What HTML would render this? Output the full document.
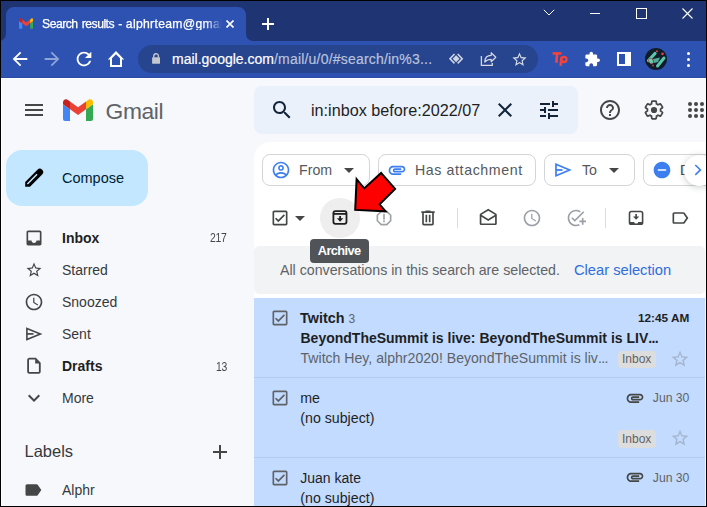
<!DOCTYPE html>
<html><head><meta charset="utf-8">
<style>
*{margin:0;padding:0;box-sizing:border-box}
html,body{width:707px;height:507px;overflow:hidden;background:#000}
body{position:relative;font-family:"Liberation Sans",sans-serif}
.a{position:absolute}
.t{position:absolute;white-space:nowrap;line-height:1}
svg{position:absolute;display:block}
</style></head><body>
<!-- chrome frame -->
<div class="a" style="left:1px;top:1px;width:705px;height:77px;background:#1f3573"></div>
<svg style="left:0;top:0" width="707" height="80" viewBox="0 0 707 80">
 <path d="M-1 41 A7 7 0 0 0 6 34 V15 A8 8 0 0 1 14 7 H238 A8 8 0 0 1 246 15 V34 A7 7 0 0 0 253 41 Z" fill="#2e52b2"/>
 <rect x="1" y="41" width="705" height="37" fill="#2e52b2"/>
 <rect x="1" y="77" width="705" height="1" fill="#2a4aa3"/>
 <rect x="0" y="0" width="707" height="1" fill="#000"/>
 <rect x="0" y="0" width="1" height="80" fill="#000"/>
 <rect x="706" y="0" width="1" height="80" fill="#000"/>
</svg>
<!-- tab title -->
<svg style="left:18.6px;top:18.3px" width="14.5" height="10.8" viewBox="0 0 14.4 10.7">
 <path d="M0 2.6 V10.7 H3.3 V5.1 Z" fill="#4285f4"/>
 <path d="M11.1 5.1 V10.7 H14.4 V2.6 Z" fill="#34a853"/>
 <path d="M0.2 1.2 L1.6 0.2 L7.2 4.5 L12.8 0.2 L14.2 1.2 L14.4 2.8 L7.2 8.2 L0 2.8 Z" fill="#ea4335"/>
 <path d="M11.1 1.6 L12.8 0.2 A1.9 1.9 0 0 1 14.4 2.1 V2.6 L11.1 5.1 Z" fill="#fbbc04"/>
 <path d="M0 2.1 A1.9 1.9 0 0 1 1.6 0.2 L3.3 1.6 V5.1 L0 2.6 Z" fill="#c5221f"/>
</svg>
<div class="t" style="left:42px;top:18px;font-size:12.2px;letter-spacing:-0.5px;word-spacing:1.2px;color:#fff;-webkit-text-stroke:0.25px #fff;width:182px;overflow:hidden;-webkit-mask-image:linear-gradient(90deg,#000 164px,transparent 180px)">Search results - <span style="letter-spacing:0.3px">alphrteam@gmail.com</span></div>
<svg style="left:226px;top:20px" width="8" height="8" viewBox="0 0 8 8"><path d="M0.5 0.5 L7.5 7.5 M7.5 0.5 L0.5 7.5" stroke="#fff" stroke-width="1.6"/></svg>
<svg style="left:262px;top:18px" width="12" height="12" viewBox="0 0 12 12"><path d="M6 0 V12 M0 6 H12" stroke="#fff" stroke-width="2"/></svg>
<!-- window controls -->
<svg style="left:543px;top:9px" width="12" height="8" viewBox="0 0 12 8"><path d="M0.8 0.8 L6 6 L11.2 0.8" stroke="#fff" stroke-width="1" fill="none"/></svg>
<div class="a" style="left:590px;top:13px;width:10px;height:1px;background:#fff"></div>
<div class="a" style="left:636px;top:8px;width:11px;height:11px;border:1px solid #fff"></div>
<svg style="left:682px;top:8px" width="11" height="11" viewBox="0 0 11 11"><path d="M0.5 0.5 L10.5 10.5 M10.5 0.5 L0.5 10.5" stroke="#fff" stroke-width="1.1"/></svg>
<!-- nav buttons -->
<svg style="left:9px;top:48px" width="22" height="22" viewBox="0 0 24 24"><path d="M20 11H7.83l5.59-5.59L12 4l-8 8 8 8 1.41-1.41L7.83 13H20v-2z" fill="#fff"/></svg>
<svg style="left:40.7px;top:48px" width="22" height="22" viewBox="0 0 24 24"><path d="M12 4l-1.41 1.41L16.17 11H4v2h12.17l-5.58 5.59L12 20l8-8z" fill="#8ea3d8"/></svg>
<svg style="left:72.5px;top:48px" width="22" height="22" viewBox="0 0 24 24"><path d="M17.65 6.35C16.2 4.9 14.21 4 12 4c-4.42 0-7.990 3.58-7.99 8s3.57 8 7.99 8c3.73 0 6.84-2.55 7.73-6h-2.08c-.82 2.33-3.04 4-5.65 4-3.31 0-6-2.69-6-6s2.69-6 6-6c1.66 0 3.14.69 4.22 1.78L13 11h7V4l-2.35 2.35z" fill="#fff"/></svg>
<svg style="left:0;top:0" width="707" height="80" viewBox="0 0 707 80"><path d="M116 51 L124.2 59.6 H122 V67 H110 V59.6 H107.8 Z M116 54.2 L120 58.2 V65 H112 V58.2 Z" fill="#fff" fill-rule="evenodd"/></svg>
<!-- omnibox -->
<div class="a" style="left:138px;top:45px;width:400px;height:28px;border-radius:14px;background:#27448f"></div>
<svg style="left:0;top:0" width="707" height="80" viewBox="0 0 707 80"><path d="M153.8 57.6 V56 A2.3 2.3 0 0 1 158.4 56 V57.6" fill="none" stroke="#c4c7cf" stroke-width="1.4"/><rect x="152.1" y="57.3" width="7.9" height="6.4" rx="0.4" fill="#c4c7cf"/></svg>
<div class="t" style="left:172px;top:52px;font-size:14px;color:#fff;-webkit-text-stroke:0.2px #fff">mail.google.com<span style="color:#b8c2dd;-webkit-text-stroke:0.2px #b8c2dd;letter-spacing:0.2px">/mail/u/0/#search/in%3...</span></div>
<svg style="left:0;top:0" width="707" height="80" viewBox="0 0 707 80">
 <path d="M454.5 54 L450 58.7 L454.5 63.4 M457.7 54 L462.2 58.7 L457.7 63.4" fill="none" stroke="#cfd4e2" stroke-width="1.6"/>
 <path d="M456.1 55.2 L459.5 58.7 L456.1 62.2 L452.7 58.7 Z" fill="#cfd4e2"/>
 <path d="M481.4 56 V65.4 H492.3 V63" fill="none" stroke="#d5d9e3" stroke-width="1.3"/>
 <path d="M484.8 62 C484.8 57.8 487.2 55.4 491.2 55.4 V52.8 L495.8 57.3 L491.2 61.8 V59.4 C488.2 59.4 486.3 60.3 484.8 62 Z" fill="none" stroke="#d5d9e3" stroke-width="1.2" stroke-linejoin="round"/>
</svg>
<svg style="left:511.4px;top:51px" width="17" height="17" viewBox="0 0 24 24"><path d="M22 9.24l-7.19-.62L12 2 9.19 8.63 2 9.24l5.46 4.73L5.82 21 12 17.27 18.18 21l-1.63-7.03L22 9.24zM12 15.4l-3.76 2.27 1-4.28-3.32-2.88 4.38-.38L12 6.1l1.71 4.04 4.38.38-3.32 2.88 1 4.28L12 15.4z" fill="#d6dbe8"/></svg>
<!-- extensions -->
<svg style="left:0;top:0" width="707" height="80" viewBox="0 0 707 80">
 <path d="M552.6 53.4 H561.4" stroke="#f4433a" stroke-width="2.6" fill="none"/>
 <path d="M557 54 L556.4 62.8" stroke="#f4433a" stroke-width="2.7" fill="none"/>
 <path d="M561.6 57 L560.6 65.8" stroke="#f4433a" stroke-width="2.6" fill="none"/>
 <circle cx="563.9" cy="59.4" r="2.6" fill="none" stroke="#f4433a" stroke-width="2.3"/>
</svg>
<svg style="left:583.6px;top:51.3px" width="16.6" height="16.6" viewBox="0 0 24 24"><path d="M20.5 11H19V7c0-1.1-.9-2-2-2h-4V3.5C13 2.12 11.88 1 10.5 1S8 2.12 8 3.5V5H4c-1.1 0-1.99.9-1.99 2v3.8H3.5c1.49 0 2.7 1.21 2.7 2.7s-1.21 2.7-2.7 2.7H2V20c0 1.1.9 2 2 2h3.8v-1.5c0-1.49 1.21-2.7 2.7-2.7 1.49 0 2.7 1.21 2.7 2.7V22H17c1.1 0 2-.9 2-2v-4h1.5c1.38 0 2.5-1.12 2.5-2.5S21.88 11 20.5 11z" fill="#fff"/></svg>
<svg style="left:617px;top:52px" width="14" height="14" viewBox="0 0 14 14"><rect x="1" y="1" width="12" height="12" fill="none" stroke="#fff" stroke-width="2"/><rect x="8" y="1" width="5" height="12" fill="#fff"/></svg>
<svg style="left:645px;top:48.3px" width="22" height="22" viewBox="0 0 22 22"><circle cx="11" cy="11" r="11" fill="#0e1d28"/>
<path d="M3.5 12.5 L10 5.5" stroke="#5cc6ad" stroke-width="3.2" stroke-linecap="round"/>
<path d="M12.5 18 L19 10" stroke="#5cc6ad" stroke-width="3" stroke-linecap="round"/>
<path d="M8 11 L15 9.5 L13 14 L9 15 Z" fill="#5cc6ad" opacity="0.85"/>
<ellipse cx="6" cy="13" rx="2.2" ry="3" transform="rotate(-30 6 13)" fill="#64d0b5" stroke="#a5413a" stroke-width="0.7"/>
<circle cx="12" cy="3.3" r="1" fill="#e0404a"/><circle cx="17.5" cy="5.8" r="1.4" fill="#e83a3a"/><circle cx="8" cy="17.5" r="0.9" fill="#d04050"/></svg>
<div class="a" style="left:687px;top:52px;width:3px;height:3px;border-radius:50%;background:#fff"></div>
<div class="a" style="left:687px;top:58px;width:3px;height:3px;border-radius:50%;background:#fff"></div>
<div class="a" style="left:687px;top:64px;width:3px;height:3px;border-radius:50%;background:#fff"></div>

<!-- gmail area -->
<div class="a" style="left:1px;top:78px;width:705px;height:428px;background:#f6f8fc"></div>

<div class="a" style="left:1px;top:78px;width:705px;height:1px;background:#fff"></div>
<div class="a" style="left:1px;top:78px;width:1px;height:428px;background:#fff"></div>
<!-- header -->
<svg style="left:22px;top:98px" width="24" height="24" viewBox="0 0 24 24"><path d="M3 18h18v-2H3v2zm0-5h18v-2H3v2zm0-7v2h18V6H3z" fill="#444746"/></svg>
<svg style="left:63px;top:99px" width="30" height="22" viewBox="0 0 30 22">
 <path d="M0 5.3 V20 A2 2 0 0 0 2 22 H7 V10.3 Z" fill="#4285f4"/>
 <path d="M23 10.3 V22 H28 A2 2 0 0 0 30 20 V5.3 Z" fill="#34a853"/>
 <path d="M7 2.6 L15 8.2 L23 2.6 V10.3 L15 16.1 L7 10.3 Z" fill="#ea4335"/>
 <path d="M23 2.6 L25 1 A3 3 0 0 1 30 3.2 V5.3 L23 10.3 Z" fill="#fbbc04"/>
 <path d="M0 3.2 A3 3 0 0 1 5 1 L7 2.6 V10.3 L0 5.3 Z" fill="#c5221f"/>
</svg>
<div class="t" style="left:105.5px;top:100px;font-size:22.8px;letter-spacing:-0.35px;color:#5f6368">Gmail</div>
<!-- compose -->
<div class="a" style="left:6px;top:150px;width:142px;height:56px;border-radius:16px;background:#c2e7ff"></div>
<svg style="left:20px;top:164px" width="28" height="28" viewBox="0 0 28 28"><path d="M5.2 22.7 V18 L17.43 5.8 A3.35 3.35 0 0 1 22.17 10.55 L10 22.7 Z" fill="#000"/><path d="M7.4 20 L17.1 10.3" stroke="#c2e7ff" stroke-width="1.5"/></svg>
<div class="t" style="left:62px;top:171px;font-size:14.5px;color:#001d35">Compose</div>
<!-- nav -->
<svg style="left:23.85px;top:228.1px" width="20" height="20" viewBox="0 0 24 24"><path d="M19 3H4.99c-1.11 0-1.98.89-1.98 2L3 19c0 1.1.88 2 1.99 2H19c1.1 0 2-.9 2-2V5c0-1.11-.9-2-2-2zm0 12h-4c0 1.66-1.35 3-3 3s-3-1.34-3-3H4.99V5H19v10z" fill="#444746"/></svg>
<div class="t" style="left:62px;top:230.5px;font-size:14px;font-weight:700;color:#1f1f1f">Inbox</div>
<div class="t" style="left:209.5px;top:231.8px;font-size:12.4px;color:#444746;letter-spacing:-0.3px;transform:scaleX(0.84);transform-origin:0 0">217</div>
<svg style="left:25.1px;top:260.9px" width="18" height="18" viewBox="0 0 24 24"><path d="M22 9.24l-7.19-.62L12 2 9.19 8.63 2 9.24l5.46 4.73L5.82 21 12 17.27 18.18 21l-1.63-7.03L22 9.24zM12 15.4l-3.76 2.27 1-4.28-3.32-2.88 4.38-.38L12 6.1l1.71 4.04 4.38.38-3.32 2.88 1 4.28L12 15.4z" fill="#444746"/></svg>
<div class="t" style="left:62px;top:262.6px;font-size:14px;color:#36383b">Starred</div>
<svg style="left:24px;top:292.1px" width="20" height="20" viewBox="0 0 24 24"><path d="M11.99 2C6.47 2 2 6.48 2 12s4.47 10 9.99 10C17.52 22 22 17.52 22 12S17.52 2 11.99 2zM12 20c-4.42 0-8-3.58-8-8s3.58-8 8-8 8 3.58 8 8-3.58 8-8 8zm.5-13H11v6l5.25 3.15.75-1.23-4.5-2.67z" fill="#444746"/></svg>
<div class="t" style="left:62px;top:294.6px;font-size:14px;color:#36383b">Snoozed</div>
<svg style="left:0;top:0" width="707" height="507" viewBox="0 0 707 507"><path d="M26.9 328.4 L40.4 333.9 L26.9 339.5 Z" fill="none" stroke="#444746" stroke-width="1.6" stroke-linejoin="miter"/><path d="M26.9 333.9 L33.5 333.9" stroke="#444746" stroke-width="1.7"/></svg>
<div class="t" style="left:62px;top:326.7px;font-size:14px;color:#36383b">Sent</div>
<svg style="left:22px;top:352px" width="24" height="28" viewBox="0 0 24 28"><path d="M7.3 6.7 H13.5 L17.8 11 V19.7 A1.2 1.2 0 0 1 16.6 20.9 H7.3 A1.2 1.2 0 0 1 6.1 19.7 V7.9 A1.2 1.2 0 0 1 7.3 6.7 Z" fill="none" stroke="#444746" stroke-width="1.8"/><path d="M13.2 7 V11.4 H17.6 Z" fill="#444746"/></svg>
<div class="t" style="left:62px;top:358.5px;font-size:14px;font-weight:700;color:#1f1f1f">Drafts</div>
<div class="t" style="left:215.5px;top:360.8px;font-size:12.4px;color:#444746;letter-spacing:-0.3px;transform:scaleX(0.84);transform-origin:0 0">13</div>
<svg style="left:22px;top:386px" width="24" height="24" viewBox="0 0 24 24"><path d="M16.59 8.59L12 13.17 7.41 8.59 6 10l6 6 6-6z" fill="#444746"/></svg>
<div class="t" style="left:62px;top:390.8px;font-size:14px;color:#36383b">More</div>
<div class="t" style="left:24.5px;top:442.7px;font-size:16.5px;color:#36383b">Labels</div>
<svg style="left:208px;top:440px" width="24" height="24" viewBox="0 0 24 24"><path d="M19 13h-6v6h-2v-6H5v-2h6V5h2v6h6v2z" fill="#444746"/></svg>
<svg style="left:23.4px;top:479.9px" width="20" height="20" viewBox="0 0 24 24"><path d="M17.63 5.84C17.27 5.33 16.67 5 16 5L5 5.01C3.9 5.01 3 5.9 3 7v10c0 1.1.9 1.99 2 1.99L16 19c.67 0 1.27-.33 1.63-.84L22 12l-4.37-6.16z" fill="#444746"/></svg>
<div class="t" style="left:62px;top:483.4px;font-size:14px;color:#36383b">Alphr</div>

<!-- search -->
<div class="a" style="left:254px;top:86px;width:324px;height:48px;border-radius:8px;background:#eaf1fb"></div>
<svg style="left:270px;top:98px" width="24" height="24" viewBox="0 0 24 24"><path d="M15.5 14h-.79l-.28-.27C15.41 12.59 16 11.11 16 9.5 16 5.91 13.09 3 9.5 3S3 5.91 3 9.5 5.91 16 9.5 16c1.61 0 3.09-.59 4.23-1.57l.27.28v.79l5 4.99L20.49 19l-4.99-5zm-6 0C7.01 14 5 11.99 5 9.5S7.01 5 9.5 5 14 7.01 14 9.5 11.99 14 9.5 14z" fill="#13243a"/></svg>
<div class="t" style="left:311px;top:102px;font-size:16.2px;color:#1f1f1f">in:inbox before:2022/07</div>
<svg style="left:493px;top:98px" width="24" height="24" viewBox="0 0 24 24"><path d="M19 6.41L17.59 5 12 10.59 6.41 5 5 6.41 10.59 12 5 17.59 6.41 19 12 13.41 17.59 19 19 17.59 13.41 12z" fill="#13243a"/></svg>
<svg style="left:537px;top:98px" width="24" height="24" viewBox="0 0 24 24"><path d="M3 17v2h6v-2H3zM3 5v2h10V5H3zm10 16v-2h8v-2h-8v-2h-2v6h2zM7 9v2H3v2h4v2h2V9H7zm14 4v-2H11v2h10zm-6-4h2V7h4V5h-4V3h-2v6z" fill="#13243a"/></svg>
<svg style="left:598px;top:98px" width="24" height="24" viewBox="0 0 24 24"><path d="M11 18h2v-2h-2v2zm1-16C6.48 2 2 6.48 2 12s4.48 10 10 10 10-4.48 10-10S17.52 2 12 2zm0 18c-4.41 0-8-3.59-8-8s3.59-8 8-8 8 3.59 8 8-3.59 8-8 8zm0-14c-2.21 0-4 1.79-4 4h2c0-1.1.9-2 2-2s2 .9 2 2c0 2-3 1.75-3 5h2c0-2.25 3-2.5 3-5 0-2.21-1.79-4-4-4z" fill="#444746"/></svg>
<svg style="left:643px;top:99px" width="22" height="22" viewBox="0 0 24 24"><path d="M19.14 12.94c.04-.3.06-.61.06-.94 0-.32-.02-.64-.07-.94l2.03-1.58c.18-.14.23-.41.12-.61l-1.92-3.32c-.12-.22-.37-.29-.59-.22l-2.39.96c-.5-.38-1.03-.7-1.62-.94l-.36-2.54c-.04-.24-.24-.41-.48-.41h-3.84c-.24 0-.43.17-.47.41l-.36 2.54c-.59.24-1.13.57-1.62.94l-2.39-.96c-.22-.08-.47 0-.59.22L2.74 8.87c-.12.21-.08.47.12.61l2.03 1.58c-.05.3-.09.63-.09.94s.02.64.07.94l-2.03 1.58c-.18.14-.23.41-.12.61l1.92 3.32c.12.22.37.29.59.22l2.39-.96c.5.38 1.03.7 1.62.94l.36 2.54c.05.24.24.41.48.41h3.84c.24 0 .44-.17.47-.41l.36-2.54c.59-.24 1.13-.56 1.62-.94l2.39.96c.22.08.47 0 .59-.22l1.92-3.32c.12-.22.07-.47-.12-.61l-2.01-1.58z" fill="none" stroke="#444746" stroke-width="1.9"/><circle cx="12" cy="12" r="3.4" fill="#444746"/></svg>
<svg style="left:686px;top:102px" width="20" height="16" viewBox="0 0 20 16">
 <circle cx="4" cy="2" r="2" fill="#444746"/><circle cx="10" cy="2" r="2" fill="#444746"/><circle cx="16" cy="2" r="2" fill="#444746"/>
 <circle cx="4" cy="8" r="2" fill="#444746"/><circle cx="10" cy="8" r="2" fill="#444746"/><circle cx="16" cy="8" r="2" fill="#444746"/>
 <circle cx="4" cy="14" r="2" fill="#444746"/><circle cx="10" cy="14" r="2" fill="#444746"/><circle cx="16" cy="14" r="2" fill="#444746"/>
</svg>

<!-- main panel -->
<div class="a" style="left:254px;top:142px;width:451px;height:364px;border-radius:16px 0 0 0;background:#fff"></div>
<!-- chips -->
<div class="a" style="left:262px;top:154px;width:108px;height:32px;border:1px solid #d3d5d8;border-radius:8px"></div>
<svg style="left:271px;top:160px" width="20" height="20" viewBox="0 0 24 24"><path d="M12 2C6.48 2 2 6.48 2 12s4.48 10 10 10 10-4.48 10-10S17.52 2 12 2zM7.07 18.28c.43-.9 3.05-1.78 4.93-1.78s4.51.88 4.93 1.78C15.57 19.36 13.86 20 12 20s-3.57-.64-4.93-1.72zm11.29-1.45c-1.43-1.74-4.9-2.330-6.36-2.33s-4.93.59-6.36 2.33C4.62 15.49 4 13.82 4 12c0-4.41 3.59-8 8-8s8 3.59 8 8c0 1.82-.62 3.490-1.64 4.83zM12 6c-1.94 0-3.5 1.56-3.5 3.5S10.06 13 12 13s3.5-1.56 3.5-3.5S13.94 6 12 6zm0 5c-.83 0-1.5-.67-1.5-1.5S11.17 8 12 8s1.5.67 1.5 1.5S12.83 11 12 11z" fill="#3d7fef"/></svg>
<div class="t" style="left:299px;top:162.8px;font-size:14.2px;color:#55585c">From</div>
<svg style="left:337px;top:158px" width="24" height="24" viewBox="0 0 24 24"><path d="M7 10l5 5 5-5z" fill="#444746"/></svg>
<div class="a" style="left:378px;top:154px;width:158px;height:32px;border:1px solid #d3d5d8;border-radius:8px"></div>
<svg style="left:387.1px;top:159.7px" width="20" height="20" viewBox="0 0 24 24"><path d="M2 12.5C2 9.46 4.46 7 7.5 7H18c2.21 0 4 1.79 4 4s-1.79 4-4 4H9.5C8.12 15 7 13.88 7 12.5S8.12 10 9.5 10H17v2H9.41c-.55 0-.55 1 0 1H18c1.1 0 2-.9 2-2s-.9-2-2-2H7.5C5.57 9 4 10.57 4 12.5S5.57 16 7.5 16H17v2H7.5C4.46 18 2 15.54 2 12.5z" fill="#3d7fef"/></svg>
<div class="t" style="left:415px;top:163px;font-size:14.2px;color:#55585c;letter-spacing:0.6px">Has attachment</div>
<div class="a" style="left:544px;top:154px;width:91px;height:32px;border:1px solid #d3d5d8;border-radius:8px"></div>
<svg style="left:0;top:0" width="707" height="507" viewBox="0 0 707 507"><path d="M556 164.2 L569.6 170 L556 175.7 Z" fill="none" stroke="#3d7fef" stroke-width="1.7"/><path d="M556 170 L562.5 170" stroke="#3d7fef" stroke-width="1.8"/></svg>
<div class="t" style="left:582px;top:163px;font-size:14.2px;color:#55585c">To</div>
<svg style="left:602px;top:158px" width="24" height="24" viewBox="0 0 24 24"><path d="M7 10l5 5 5-5z" fill="#444746"/></svg>
<div class="a" style="left:643px;top:154px;width:100px;height:32px;border:1px solid #d3d5d8;border-radius:8px"></div>
<svg style="left:652px;top:160px" width="20" height="20" viewBox="0 0 24 24"><path d="M12 2C6.48 2 2 6.48 2 12s4.48 10 10 10 10-4.48 10-10S17.52 2 12 2zm5 11H7v-2h10v2z" fill="#3d7fef"/></svg>
<div class="t" style="left:680px;top:163px;font-size:14.2px;color:#444746">Don't</div>
<div class="a" style="left:683.5px;top:154.8px;width:31px;height:31px;border-radius:50%;background:#fff;box-shadow:0 1px 6px rgba(60,64,67,.28)"></div>
<svg style="left:0;top:0" width="707" height="507" viewBox="0 0 707 507"><path d="M695.3 165 L700.4 169.9 L695.3 174.8" fill="none" stroke="#3d7fef" stroke-width="1.6"/></svg>

<!-- toolbar -->
<div class="a" style="left:320px;top:197.6px;width:40px;height:40px;border-radius:50%;background:#eeeeee"></div>
<svg style="left:269.85px;top:208px" width="20" height="20" viewBox="0 0 24 24"><path d="M19 3H5c-1.11 0-2 .9-2 2v14c0 1.1.89 2 2 2h14c1.11 0 2-.9 2-2V5c0-1.1-.89-2-2-2zm0 16H5V5h14v14zM17.99 9l-1.41-1.42-6.59 6.59-2.58-2.57-1.42 1.41 4 3.99z" fill="#444746"/></svg>
<svg style="left:288px;top:206px" width="24" height="24" viewBox="0 0 24 24"><path d="M7 10l5 5 5-5z" fill="#444746"/></svg>
<svg style="left:0;top:0" width="707" height="507" viewBox="0 0 707 507">
 <rect x="333.4" y="211.2" width="13.1" height="12.6" rx="2" fill="none" stroke="#1f1f1f" stroke-width="1.8"/>
 <path d="M333.4 213.9 H346.5" stroke="#1f1f1f" stroke-width="1.8"/>
 <path d="M340.1 216 V220" stroke="#1f1f1f" stroke-width="1.8"/>
 <path d="M336.9 218.2 L340.1 221.7 L343.3 218.2 Z" fill="#1f1f1f"/>
</svg>
<svg style="left:374.2px;top:208.4px" width="20" height="20" viewBox="0 0 24 24"><path d="M15.73 3H8.27L3 8.27v7.46L8.27 21h7.46L21 15.73V8.27L15.73 3zM19 14.9L14.9 19H9.1L5 14.9V9.1L9.1 5h5.8L19 9.1v5.8zM11 7h2v7h-2zm0 8h2v2h-2z" fill="#a0a3a6"/></svg>
<svg style="left:418.1px;top:207.7px" width="20" height="20" viewBox="0 0 24 24"><path d="M15 4V3H9v1H4v2h1v13c0 1.1.9 2 2 2h10c1.1 0 2-.9 2-2V6h1V4h-5zm2 15H7V6h10v13zM9 8h2v9H9zm4 0h2v9h-2z" fill="#444746"/></svg>
<div class="a" style="left:457px;top:208px;width:1px;height:20px;background:#dadce0"></div>
<svg style="left:477.75px;top:208.1px" width="20.5" height="20.5" viewBox="0 0 24 24"><path d="M21.99 8c0-.72-.37-1.35-.94-1.7L12 1 2.95 6.3C2.38 6.65 2 7.28 2 8v10c0 1.1.9 2 2 2h16c1.1 0 2-.9 2-2l-.01-10zm-2 0v.01L12 13 4 8l8-4.68L19.99 8zM4 18v-7.66l8 5.02 7.99-4.99L20 18H4z" fill="#444746"/></svg>
<svg style="left:522px;top:207.8px" width="20" height="20" viewBox="0 0 24 24"><path d="M11.99 2C6.47 2 2 6.48 2 12s4.47 10 9.99 10C17.52 22 22 17.52 22 12S17.52 2 11.99 2zM12 20c-4.42 0-8-3.58-8-8s3.58-8 8-8 8 3.58 8 8-3.58 8-8 8zm.5-13H11v6l5.25 3.15.75-1.23-4.5-2.67z" fill="#9aa0a6"/></svg>
<svg style="left:566.3px;top:207.85px" width="20" height="20" viewBox="0 0 24 24"><path d="M22 5.18L10.59 16.6l-4.24-4.24 1.41-1.41 2.83 2.83 10-10L22 5.18zM12 20c-4.41 0-8-3.59-8-8s3.59-8 8-8c1.57 0 3.04.46 4.28 1.25l1.45-1.45C16.1 2.67 14.13 2 12 2 6.48 2 2 6.48 2 12s4.48 10 10 10c1.73 0 3.36-.44 4.78-1.22l-1.5-1.5c-1 .46-2.11.72-3.28.72zm7-5h-3v2h3v3h2v-3h3v-2h-3v-3h-2v3z" fill="#9aa0a6"/></svg>
<div class="a" style="left:605px;top:208px;width:1px;height:20px;background:#dadce0"></div>
<svg style="left:0;top:0" width="707" height="507" viewBox="0 0 707 507">
 <rect x="629.5" y="211.5" width="13.1" height="12.7" rx="1.8" fill="none" stroke="#444746" stroke-width="1.6"/>
 <path d="M629.5 222 H634.2 A2 2 0 0 0 638.2 222 H642.6 V224.2 H629.5 Z" fill="#444746"/>
 <path d="M636.1 214 V218" stroke="#444746" stroke-width="1.6"/>
 <path d="M633 216.6 L636.1 219.8 L639.2 216.6 Z" fill="#444746"/>
</svg>
<svg style="left:669.7px;top:207.95px" width="20" height="20" viewBox="0 0 24 24"><path d="M17.63 5.84C17.27 5.33 16.67 5 16 5L5 5.01C3.9 5.01 3 5.9 3 7v10c0 1.1.9 1.99 2 1.99L16 19c.67 0 1.27-.33 1.63-.84L22 12l-4.37-6.16zM16 17H5V7h11l3.55 5L16 17z" fill="#444746"/></svg>

<!-- banner -->
<div class="a" style="left:254px;top:246px;width:450.5px;height:48px;border-radius:5px;background:#f1f3f4"></div>
<div class="t" style="left:280px;top:263px;font-size:14.2px;color:#5f6368">All conversations in this search are selected.</div>
<div class="t" style="left:574px;top:263px;font-size:14.7px;color:#2f6de0">Clear selection</div>

<!-- rows -->
<div class="a" style="left:254px;top:298px;width:451px;height:208px;background:#c2dbff"></div>
<div class="a" style="left:254px;top:377px;width:451px;height:1px;background:#b3caea"></div>
<div class="a" style="left:254px;top:457px;width:451px;height:1px;background:#b3caea"></div>

<svg style="left:270.1px;top:307.9px" width="20" height="20" viewBox="0 0 24 24"><path d="M19 3H5c-1.11 0-2 .9-2 2v14c0 1.1.89 2 2 2h14c1.11 0 2-.9 2-2V5c0-1.1-.89-2-2-2zm0 16H5V5h14v14zM17.99 9l-1.41-1.42-6.59 6.59-2.58-2.57-1.42 1.41 4 3.99z" fill="#5f6368"/></svg>
<div class="t" style="left:300px;top:311.2px;font-size:14.4px;font-weight:700;color:#1f1f1f">Twitch <span style="font-weight:400;font-size:12px;color:#5f6368">3</span></div>
<div class="t" style="left:638px;top:313px;font-size:11.8px;font-weight:700;color:#1f1f1f">12:45 AM</div>
<div class="t" style="left:300.5px;top:330.8px;font-size:14px;font-weight:700;color:#1f1f1f">BeyondTheSummit is live: BeyondTheSummit is LIV<span style="letter-spacing:-0.6px">...</span></div>
<div class="t" style="left:300.5px;top:351px;font-size:14.1px;color:#5f6368">Twitch Hey, alphr2020! BeyondTheSummit is liv<span style="letter-spacing:-0.6px">...</span></div>
<div class="a" style="left:618px;top:350.6px;width:38px;height:17px;border-radius:4px;background:#dddddd"></div>
<div class="t" style="left:622px;top:353.4px;font-size:12px;color:#5f6368">Inbox</div>
<svg style="left:670px;top:349px" width="20" height="20" viewBox="0 0 24 24"><path d="M22 9.24l-7.19-.62L12 2 9.19 8.63 2 9.24l5.46 4.73L5.82 21 12 17.27 18.18 21l-1.63-7.03L22 9.24zM12 15.4l-3.76 2.27 1-4.28-3.32-2.88 4.38-.38L12 6.1l1.71 4.04 4.38.38-3.32 2.88 1 4.28L12 15.4z" fill="#a4b4cc"/></svg>

<svg style="left:270.1px;top:388px" width="20" height="20" viewBox="0 0 24 24"><path d="M19 3H5c-1.11 0-2 .9-2 2v14c0 1.1.89 2 2 2h14c1.11 0 2-.9 2-2V5c0-1.1-.89-2-2-2zm0 16H5V5h14v14zM17.99 9l-1.41-1.42-6.59 6.59-2.58-2.57-1.42 1.41 4 3.99z" fill="#5f6368"/></svg>
<div class="t" style="left:300.3px;top:391px;font-size:14.2px;color:#1f1f1f">me</div>
<div class="t" style="left:300.3px;top:410.5px;font-size:14.2px;color:#1f1f1f">(no subject)</div>
<svg style="left:624.85px;top:387.8px" width="20" height="20" viewBox="0 0 24 24"><path d="M2 12.5C2 9.46 4.46 7 7.5 7H18c2.21 0 4 1.79 4 4s-1.79 4-4 4H9.5C8.12 15 7 13.88 7 12.5S8.12 10 9.5 10H17v2H9.41c-.55 0-.55 1 0 1H18c1.1 0 2-.9 2-2s-.9-2-2-2H7.5C5.57 9 4 10.57 4 12.5S5.57 16 7.5 16H17v2H7.5C4.46 18 2 15.54 2 12.5z" fill="#444746"/></svg>
<div class="t" style="left:652.8px;top:392px;font-size:12.2px;color:#5f6368">Jun 30</div>
<div class="a" style="left:618px;top:430px;width:38px;height:18px;border-radius:4px;background:#dddddd"></div>
<div class="t" style="left:622px;top:432.6px;font-size:12px;color:#5f6368">Inbox</div>
<svg style="left:670px;top:428px" width="20" height="20" viewBox="0 0 24 24"><path d="M22 9.24l-7.19-.62L12 2 9.19 8.63 2 9.24l5.46 4.73L5.82 21 12 17.27 18.18 21l-1.63-7.03L22 9.24zM12 15.4l-3.76 2.27 1-4.28-3.32-2.88 4.38-.38L12 6.1l1.71 4.04 4.38.38-3.32 2.88 1 4.28L12 15.4z" fill="#a4b4cc"/></svg>

<svg style="left:270.1px;top:467.8px" width="20" height="20" viewBox="0 0 24 24"><path d="M19 3H5c-1.11 0-2 .9-2 2v14c0 1.1.89 2 2 2h14c1.11 0 2-.9 2-2V5c0-1.1-.89-2-2-2zm0 16H5V5h14v14zM17.99 9l-1.41-1.42-6.59 6.59-2.58-2.57-1.42 1.41 4 3.99z" fill="#5f6368"/></svg>
<div class="t" style="left:300.3px;top:471px;font-size:14px;color:#1f1f1f">Juan kate</div>
<div class="t" style="left:300.3px;top:490.5px;font-size:14.2px;color:#1f1f1f">(no subject)</div>
<svg style="left:624.85px;top:467.3px" width="20" height="20" viewBox="0 0 24 24"><path d="M2 12.5C2 9.46 4.46 7 7.5 7H18c2.21 0 4 1.79 4 4s-1.79 4-4 4H9.5C8.12 15 7 13.88 7 12.5S8.12 10 9.5 10H17v2H9.41c-.55 0-.55 1 0 1H18c1.1 0 2-.9 2-2s-.9-2-2-2H7.5C5.57 9 4 10.57 4 12.5S5.57 16 7.5 16H17v2H7.5C4.46 18 2 15.54 2 12.5z" fill="#444746"/></svg>
<div class="t" style="left:652.8px;top:472px;font-size:12.2px;color:#5f6368">Jun 30</div>

<!-- tooltip -->
<div class="a" style="left:310px;top:239px;width:59px;height:24px;border-radius:4px;background:#505458"></div>
<div class="t" style="left:317.8px;top:244.6px;font-size:12.8px;letter-spacing:-0.6px;font-weight:700;color:#fff">Archive</div>

<!-- red arrow -->
<svg style="left:0;top:0" width="707" height="507" viewBox="0 0 707 507"><path d="M355.2 209.9 L356.6 179.2 L364.2 188.4 L381.1 172.9 L395.1 188.9 L379.6 204.3 L385.6 211.3 Z" fill="#ff0000" stroke="#000" stroke-width="2" stroke-linejoin="miter"/></svg>

<div class="a" style="left:706px;top:0;width:1px;height:507px;background:#000"></div>
<div class="a" style="left:0;top:506px;width:707px;height:1px;background:#000"></div>
<div class="a" style="left:0;top:0;width:1px;height:507px;background:#000"></div>
</body></html>
